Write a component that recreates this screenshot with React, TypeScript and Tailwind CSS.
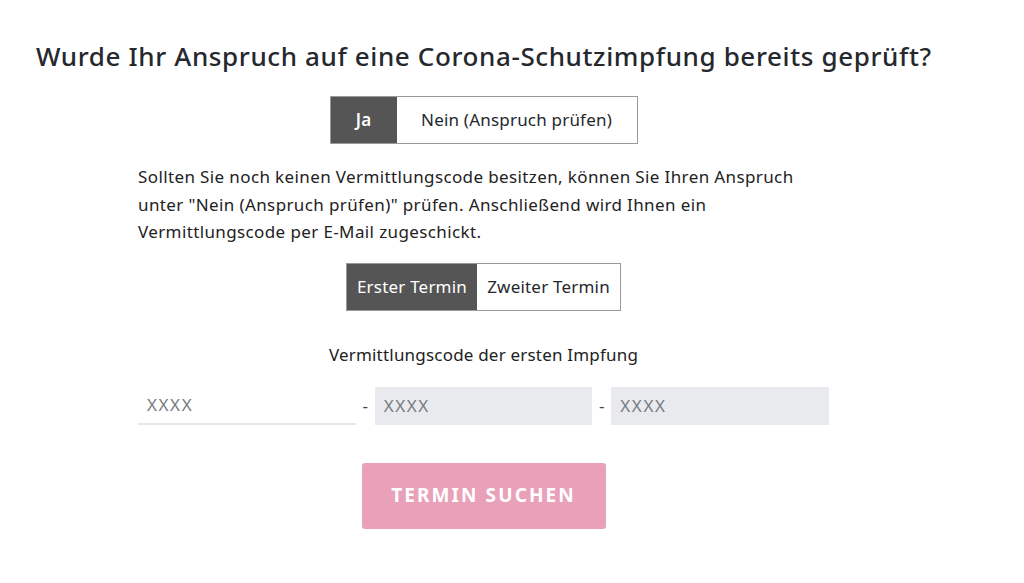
import React from "react";

export default function App() {
  const font = { fontFamily: "'Noto Sans', 'Liberation Sans', sans-serif" };
  return (
    <div className="w-[1024px] h-[583px] bg-white text-[#25282d] overflow-hidden" style={font}>
      <h1 className="pl-[36px] pt-[38px] text-[26px] leading-[36px] font-medium tracking-[0.62px] whitespace-nowrap">
        Wurde Ihr Anspruch auf eine Corona-Schutzimpfung bereits geprüft?
      </h1>
      <div className="ml-[138px] w-[691px] flex flex-col items-center">
        <div className="mt-[22px] flex h-[48px] border border-[#9a9a9a] text-[17px] tracking-[0.2px]">
          <div className="w-[66px] bg-[#555555] text-white font-semibold flex items-center justify-center">Ja</div>
          <div className="w-[240px] bg-white flex items-center justify-center">Nein (Anspruch prüfen)</div>
        </div>
        <p className="self-start mt-[19px] text-[17px] leading-[27.5px] tracking-[0.38px] text-[#222] w-[672px]">
          Sollten Sie noch keinen Vermittlungscode besitzen, können Sie Ihren Anspruch unter "Nein (Anspruch prüfen)" prüfen. Anschließend wird Ihnen ein Vermittlungscode per E-Mail zugeschickt.
        </p>
        <div className="mt-[17px] flex h-[48px] border border-[#9a9a9a] text-[17px] tracking-[0.2px]">
          <div className="w-[130px] bg-[#555555] text-white flex items-center justify-center">Erster Termin</div>
          <div className="w-[143px] bg-white flex items-center justify-center">Zweiter Termin</div>
        </div>
        <div className="mt-[33px] text-[17px] leading-[22px] tracking-[0.2px] text-[#222]">Vermittlungscode der ersten Impfung</div>
        <div className="mt-[21px] flex items-center w-full h-[38px] text-[17px]">
          <div className="w-[218px] h-full bg-white border-b-2 border-[#e6e7ea] flex items-center pl-[9px] text-[#777b82] tracking-[1.6px]">XXXX</div>
          <div className="w-[19px] text-center text-[#444]">-</div>
          <div className="w-[218px] h-full bg-[#e9eaed] flex items-center pl-[9px] text-[#777b82] tracking-[1.6px]">XXXX</div>
          <div className="w-[19px] text-center text-[#444]">-</div>
          <div className="w-[218px] h-full bg-[#e9eaed] flex items-center pl-[9px] text-[#777b82] tracking-[1.6px]">XXXX</div>
        </div>
        <button className="mt-[38px] w-[244px] h-[66px] rounded-[3px] bg-[#e9a1ba] text-white text-[19px] font-bold tracking-[2.1px]">
          TERMIN SUCHEN
        </button>
      </div>
    </div>
  );
}
